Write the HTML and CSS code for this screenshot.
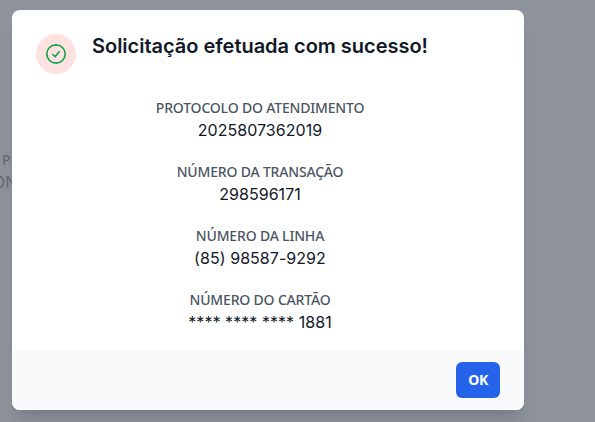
FILE: index.html
```html
<!DOCTYPE html>
<html lang="pt-BR">
<head>
    <meta charset="UTF-8">
    <meta name="viewport" content="width=device-width, initial-scale=1.0">
    <title>Solicitação efetuada</title>
    <link rel="stylesheet" href="styles.css">
</head>
<body>

    <!-- Página atrás do modal -->
    <div class="page-behind">
        <p class="behind-label">P</p>
        <p class="behind-value">ON</p>
    </div>

    <!-- Modal de sucesso -->
    <div class="overlay">
        <div class="modal" role="dialog" aria-labelledby="modalTitle">
            <div class="modal-body">
                <div class="modal-header">
                    <div class="icon-circle">
                        <svg class="icon" viewBox="0 0 24 24" fill="none" stroke="currentColor" stroke-width="2" stroke-linecap="round" stroke-linejoin="round">
                            <circle cx="12" cy="12" r="11"></circle>
                            <path d="M8.2 12.6l2.7 2.7 4.9-6.1"></path>
                        </svg>
                    </div>
                    <h3 id="modalTitle">Solicitação efetuada com sucesso!</h3>
                </div>

                <dl class="details">
                    <div class="detail">
                        <dt>PROTOCOLO DO ATENDIMENTO</dt>
                        <dd>2025807362019</dd>
                    </div>
                    <div class="detail">
                        <dt>NÚMERO DA TRANSAÇÃO</dt>
                        <dd>298596171</dd>
                    </div>
                    <div class="detail">
                        <dt>NÚMERO DA LINHA</dt>
                        <dd>(85) 98587-9292</dd>
                    </div>
                    <div class="detail">
                        <dt>NÚMERO DO CARTÃO</dt>
                        <dd>**** **** **** 1881</dd>
                    </div>
                </dl>
            </div>

            <div class="modal-footer">
                <button type="button" class="btn">OK</button>
            </div>
        </div>
    </div>

</body>
</html>
```
FILE: styles.css
```css
* {
    margin: 0;
    padding: 0;
    box-sizing: border-box;
}

body {
    height: 422px;
    overflow: hidden;
    font-family: Inter, sans-serif;
    background-color: #8f939e;
    color: #111827;
}

/* Conteúdo escurecido pelo overlay */
.page-behind {
    position: absolute;
    top: 150px;
    left: 0;
    width: 12px;
    overflow: hidden;
    color: #646a77;
}

.behind-label {
    padding-left: 2px;
    font-family: "Noto Sans", sans-serif;
    font-size: 14px;
    font-weight: 500;
    line-height: 20px;
}

.behind-value {
    margin-left: -7px;
    font-size: 16px;
    line-height: 24px;
}

.overlay {
    position: relative;
    padding: 10px 12px;
}

.modal {
    width: 512px;
    height: 400px;
    display: flex;
    flex-direction: column;
    overflow: hidden;
    background-color: white;
    border-radius: 8px;
    box-shadow: 0 20px 25px -5px rgba(0, 0, 0, 0.1), 0 8px 10px -6px rgba(0, 0, 0, 0.1);
}

.modal-body {
    flex: 1;
    padding: 24px 24px 16px;
}

.modal-header {
    display: flex;
    gap: 16px;
}

.icon-circle {
    width: 40px;
    height: 40px;
    display: flex;
    justify-content: center;
    align-items: center;
    border-radius: 50%;
    background-color: #fee2e2;
    color: #16a34a;
}

.icon {
    width: 20px;
    height: 20px;
}

h3 {
    font-size: 20px;
    font-weight: 600;
    line-height: 24px;
    letter-spacing: -0.02px;
}

.details {
    display: flex;
    flex-direction: column;
    gap: 20px;
    margin-top: 24px;
    padding-right: 16px;
    text-align: center;
}

.detail dt {
    font-family: "Noto Sans", sans-serif;
    font-size: 14px;
    font-weight: 500;
    line-height: 20px;
    letter-spacing: -0.18px;
    color: #4b5563;
}

.detail dd {
    font-size: 16px;
    line-height: 24px;
    letter-spacing: 0.05px;
}

.modal-footer {
    height: 60px;
    display: flex;
    justify-content: flex-end;
    align-items: center;
    padding: 12px 24px;
    background-color: #f9fafb;
}

.btn {
    width: 44px;
    height: 36px;
    border: none;
    border-radius: 6px;
    background-color: #2563eb;
    color: white;
    font-family: "Noto Sans", sans-serif;
    font-size: 14px;
    font-weight: 700;
    line-height: 20px;
    letter-spacing: -0.4px;
    cursor: pointer;
}

.btn:hover {
    background-color: #1d4ed8;
}
```
